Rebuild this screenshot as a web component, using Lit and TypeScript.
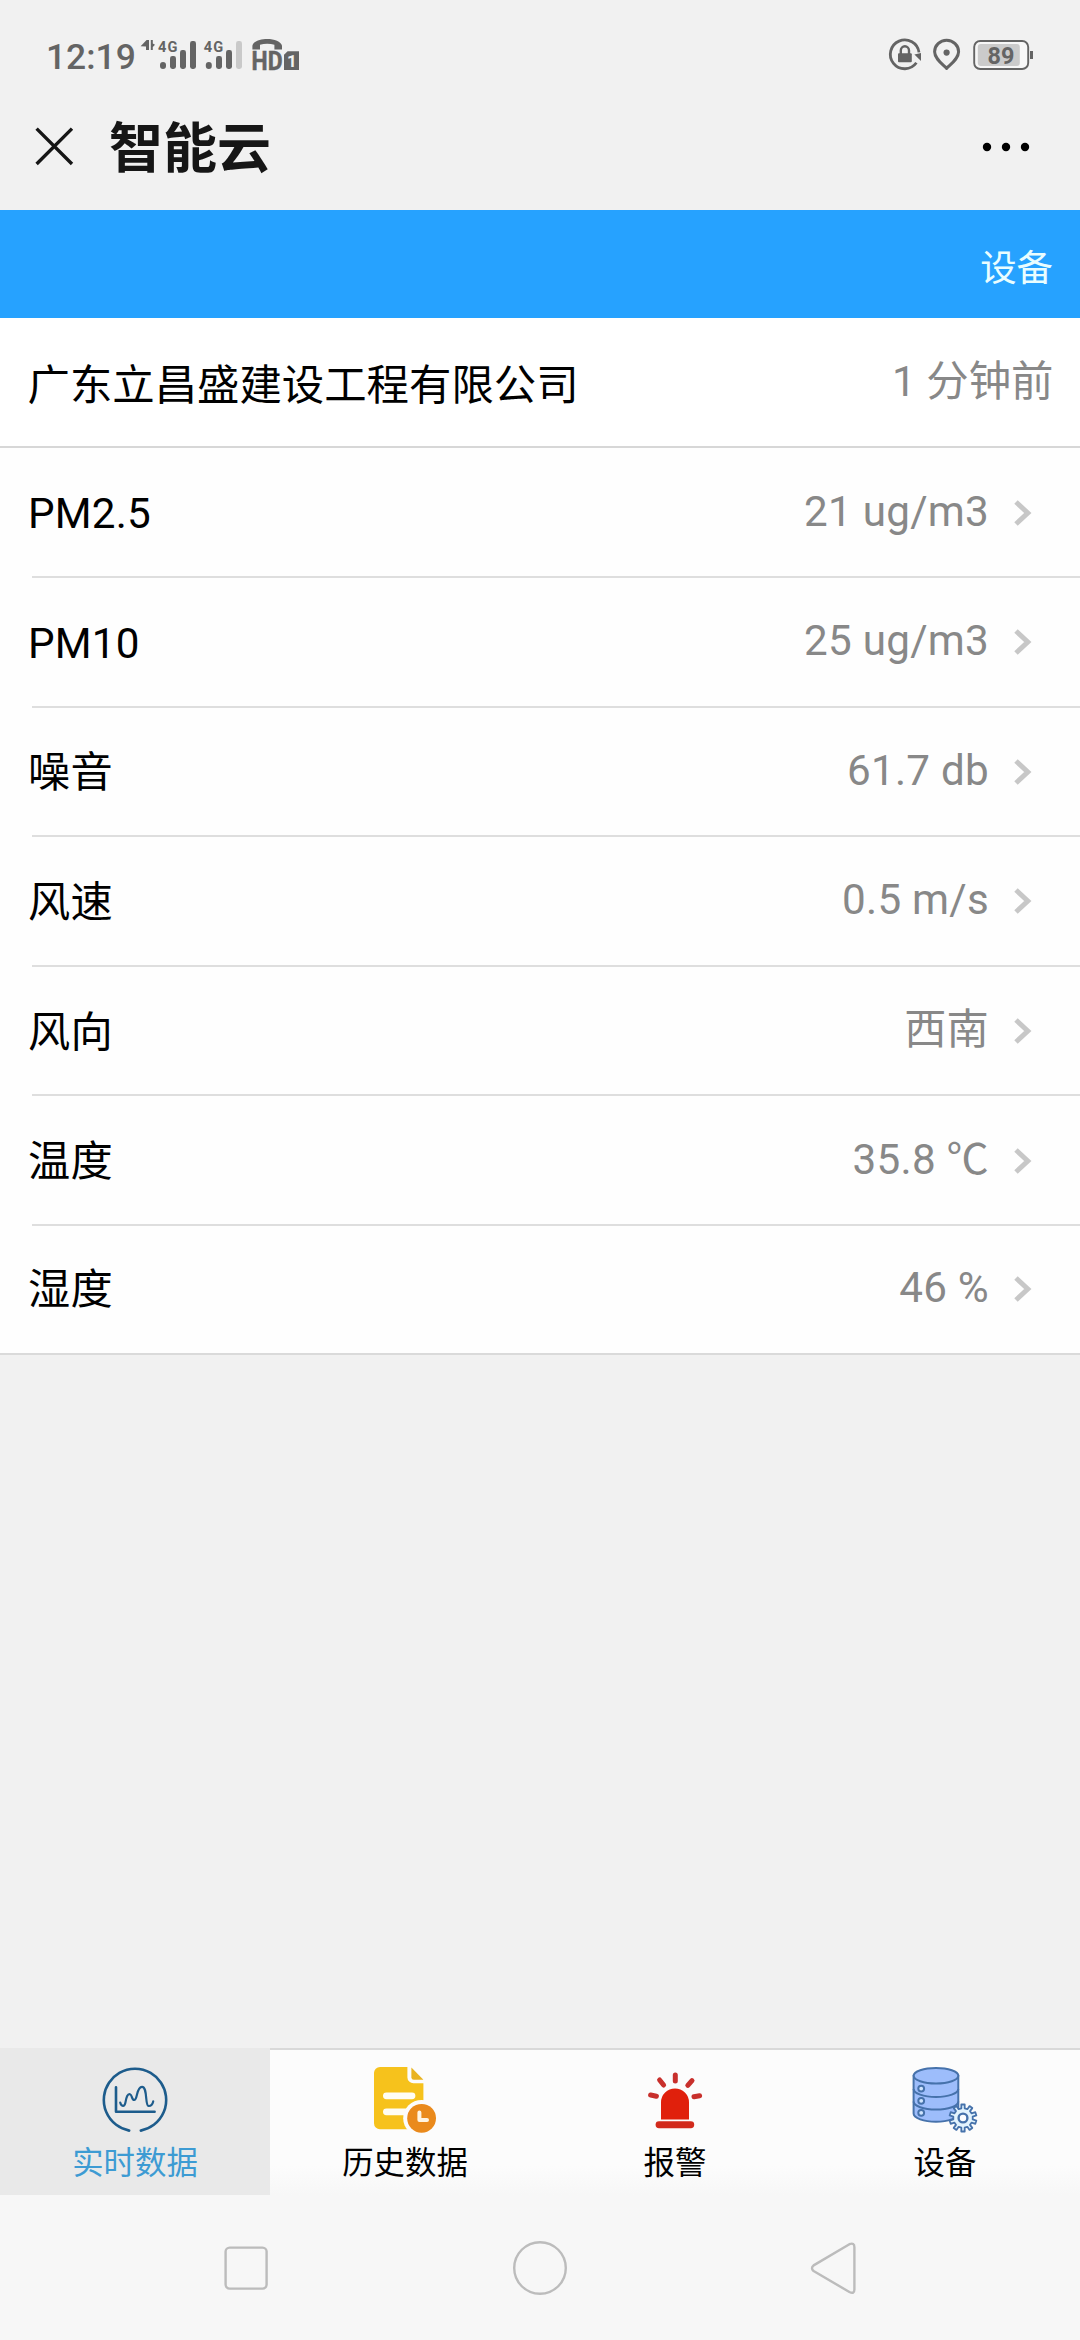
import { LitElement, html, css, svg } from "lit";
import { customElement, property } from "lit/decorators.js";

interface Reading {
  label: string;
  value: string;
}

const READINGS: Reading[] = [
  { label: "PM2.5", value: "21 ug/m3" },
  { label: "PM10", value: "25 ug/m3" },
  { label: "噪音", value: "61.7 db" },
  { label: "风速", value: "0.5 m/s" },
  { label: "风向", value: "西南" },
  { label: "温度", value: "35.8 ℃" },
  { label: "湿度", value: "46 %" },
];

/** Closed outline of a cog with square teeth. */
function gearPath(cx: number, cy: number, outer: number, inner: number, teeth: number): string {
  const step = (Math.PI * 2) / teeth;
  const pts: string[] = [];
  for (let i = 0; i < teeth; i++) {
    const a = i * step - Math.PI / 2;
    for (const [da, r] of [[-0.27, inner], [-0.2, outer], [0.2, outer], [0.27, inner]]) {
      const t = a + da * step;
      pts.push(`${(cx + Math.cos(t) * r).toFixed(2)} ${(cy + Math.sin(t) * r).toFixed(2)}`);
    }
  }
  return `M${pts.join("L")}Z`;
}

const ICONS = {
  realtime: svg`
    <g fill="none" stroke="#1d5c8c" stroke-width="2.6" stroke-linecap="round" stroke-linejoin="round">
      <path d="M30.2 66.6A31.2 31.2 0 1 1 41.8 66.6"/>
      <path d="M17 23.2V47.8H55.6"/>
      <path stroke-width="2.2" d="M21.2 38.6C22.2 42.6 25.6 43.2 26.4 38.6C27.4 33 28.6 29.6 31 30.2C33.4 30.8 32.4 36 35.2 36C38.8 36 37.2 22.8 43 22.8C48.8 22.8 45.8 41.6 49.6 42C52.2 42.2 53.4 40.6 54.2 37.4"/>
    </g>`,
  history: svg`
    <path fill="#f6c21c" d="M11 3H38.4V13.4A6 6 0 0 0 44.4 19.2H54.4V65.2H11A6 6 0 0 1 5 59.2V9A6 6 0 0 1 11 3Z"/>
    <path fill="#e9b320" d="M42.4 3.4L54.4 15.8H44.8A2.4 2.4 0 0 1 42.4 13.4Z"/>
    <path stroke="#fffdf3" stroke-width="6.8" stroke-linecap="round" d="M17.4 31.8H43M17.4 47.8H38"/>
    <circle cx="52.6" cy="54.3" r="18.4" fill="#fcfcfc"/>
    <circle cx="52.6" cy="54.3" r="14.4" fill="#ea8a1c"/>
    <path fill="none" stroke="#fff4e2" stroke-width="4" stroke-linecap="round" stroke-linejoin="round" d="M50.4 48.6V56H58"/>`,
  alarm: svg`
    <path fill="#e0200c" d="M22 55.4V38.4A14 14 0 0 1 50 38.4V55.4Z"/>
    <rect x="16.6" y="57.2" width="38.6" height="7" rx="3.4" fill="#d22a1c"/>
    <path stroke="#c8302c" stroke-width="5" stroke-linecap="round" d="M36.3 11V17M20.6 16L24.6 21M53 16.6L48.8 21.4M11.6 31L17.4 32.2M60.6 31.8L55 32.8"/>`,
  device: svg`
    <g fill="#9dbdfb" stroke="#4672ab" stroke-width="2">
      <path d="M4.6 11.8V49.6C4.6 54.2 14.6 57.8 27 57.8S49.3 54.2 49.3 49.6V11.8Z"/>
      <ellipse cx="27" cy="11.8" rx="22.3" ry="7.8"/>
      <path fill="none" d="M4.6 25C4.6 29.4 14.6 33 27 33S49.3 29.4 49.3 25M4.6 37.6C4.6 42 14.6 45.6 27 45.6S49.3 42 49.3 37.6"/>
      <circle cx="12.2" cy="24.6" r="2.9" fill="#cfe4fd"/>
      <circle cx="12.2" cy="36.8" r="2.9" fill="#cfe4fd"/>
      <circle cx="12.2" cy="48.8" r="2.9" fill="#cfe4fd"/>
      <path fill="#e2f3fd" stroke-width="1.8" stroke-linejoin="round" d=${gearPath(54, 54, 13.6, 9.8, 10)} />
      <circle cx="54" cy="54" r="4.4" fill="#fbfdff" stroke-width="2.4"/>
    </g>`,
};

type IconName = keyof typeof ICONS;

const TABS: { icon: IconName; label: string; active?: boolean }[] = [
  { icon: "realtime", label: "实时数据", active: true },
  { icon: "history", label: "历史数据" },
  { icon: "alarm", label: "报警" },
  { icon: "device", label: "设备" },
];

@customElement("status-bar")
class StatusBar extends LitElement {
  static styles = css`
    :host {
      display: flex;
      justify-content: space-between;
      height: 84px;
      padding: 0 47px 0 46px;
      box-sizing: border-box;
      color: #646464;
    }
    .left {
      display: flex;
      padding-top: 35px;
    }
    .time {
      width: 92px;
      font-size: 35.4px;
      line-height: 44px;
      font-weight: 500;
      white-space: nowrap;
    }
    .signals {
      display: block;
      width: 164px;
      height: 40px;
    }
    .indicators {
      display: block;
      width: 148px;
      height: 40px;
      margin-top: 35px;
    }
    text {
      font-family: Roboto, sans-serif;
      font-weight: 700;
    }
  `;

  render() {
    return html`
      <div class="left">
        <span class="time">12:19</span>
        <svg class="signals" viewBox="138 35 164 40" fill="#646464">
          <path d="M140.6 46.2L146.6 40H149V50H146V46.4ZM150.8 40H152.8V43.6L155 44.8L152.8 47V50H150.8Z"/>
          <text x="158" y="51.6" font-size="14.6" textLength="19.4">4G</text>
          <rect x="160" y="62" width="6" height="7" rx="3"/>
          <rect x="170" y="56" width="6" height="13" rx="2.4"/>
          <rect x="180" y="50" width="6" height="19" rx="2.4"/>
          <rect x="190" y="41" width="6" height="28" rx="2.4"/>
          <text x="203.8" y="51.6" font-size="14.6" textLength="19.4">4G</text>
          <rect x="205.8" y="62" width="6" height="7" rx="3"/>
          <rect x="216" y="56" width="6" height="13" rx="2.4"/>
          <rect x="226" y="50" width="6" height="19" rx="2.4"/>
          <rect x="236" y="41" width="6" height="28" rx="2.4" fill="#c9c9c9"/>
          <path d="M252.4 49.4V45.8C254 36.6 280.4 36.6 282 45.8V49.4H274.4V44.8C270 43.4 264.4 43.4 260 44.8V49.4Z"/>
          <text x="251.6" y="69.8" font-size="26" textLength="31" lengthAdjust="spacingAndGlyphs" stroke="#646464" stroke-width="0.5">HD</text>
          <path d="M287.6 51.2H299V70H284V54.8Z"/>
          <text x="287" y="67" font-size="17" fill="#f1f1f1">1</text>
        </svg>
      </div>
      <svg class="indicators" viewBox="884 35 148 40" fill="#646464">
        <path fill="none" stroke="#646464" stroke-width="2.8" d="M915.4 62.8A14.4 14.4 0 1 1 918 52.4"/>
        <path d="M913.4 54.4L920 53V61Z"/>
        <rect x="897" y="53.2" width="13.8" height="9" rx="1"/>
        <path fill="none" stroke="#646464" stroke-width="2.4" d="M899.8 54V50.4A4.1 4.1 0 0 1 908 50.4V54"/>
        <path fill="none" stroke="#646464" stroke-width="3" stroke-linejoin="round" d="M945.6 68.4C941 63.8 933.6 58.6 933.6 51.8A12 11.6 0 0 1 957.6 51.8C957.6 58.6 950.2 63.8 945.6 68.4Z"/>
        <circle cx="945.6" cy="52.6" r="3.1"/>
        <rect x="973.2" y="41" width="54" height="28" rx="6" fill="#f7f7f7" stroke="#646464" stroke-width="1.9"/>
        <rect x="976.8" y="44" width="42" height="22" rx="3" fill="#cbcbcb"/>
        <rect x="1029" y="51" width="3" height="8"/>
        <text x="1000" y="63.6" font-size="23.4" text-anchor="middle" textLength="27">89</text>
      </svg>
    `;
  }
}

@customElement("reading-row")
class ReadingRow extends LitElement {
  static styles = css`
    :host {
      display: block;
      padding-left: 28px;
    }
    .row {
      display: flex;
      align-items: center;
      height: 129.6px;
      padding-right: 47px;
      box-sizing: border-box;
      background: linear-gradient(#dedede, #dedede) 4px 100% / 100% 2px no-repeat;
    }
    :host([last]) .row {
      height: 127px;
      padding-bottom: 0;
      background: none;
    }
    .label,
    .value {
      font-size: 42.2px;
      line-height: 60px;
    }
    .label {
      flex: 1;
      padding-top: 2px;
      letter-spacing: 0.2px;
      color: #000;
    }
    .value {
      padding-bottom: 3px;
      letter-spacing: 0.25px;
      color: #888;
    }
    .chevron {
      width: 20px;
      height: 28px;
      margin-left: 24px;
      margin-bottom: 1px;
    }
  `;

  @property() label = "";
  @property() value = "";

  render() {
    return html`
      <div class="row">
        <span class="label">${this.label}</span>
        <span class="value">${this.value}</span>
        <svg class="chevron" viewBox="0 0 20 28">
          <path d="M3 3L14.8 14L3 25" fill="none" stroke="#c7c7c7" stroke-width="5"/>
        </svg>
      </div>
    `;
  }
}

@customElement("app-root")
class AppRoot extends LitElement {
  static styles = css`
    :host {
      display: flex;
      flex-direction: column;
      width: 1080px;
      height: 2340px;
      overflow: hidden;
      background: #f1f1f1;
      font-family: Roboto, "Noto Sans CJK SC", sans-serif;
    }
    .titlebar {
      display: flex;
      align-items: center;
      height: 126px;
      padding: 0 48px 0 34px;
      box-sizing: border-box;
      flex: none;
    }
    .close {
      width: 40px;
      height: 40px;
      margin-bottom: 3px;
    }
    .title {
      flex: 1;
      margin: 0 0 0 35px;
      padding-top: 5px;
      font-size: 54px;
      line-height: 80px;
      font-weight: 700;
      color: #161616;
    }
    .more {
      width: 50px;
      height: 12px;
    }
    .toolbar {
      display: flex;
      align-items: center;
      justify-content: flex-end;
      height: 108px;
      padding: 2px 27px 0 0;
      box-sizing: border-box;
      flex: none;
      background: #26a2ff;
      color: #e9fdff;
      font-size: 36.4px;
    }
    .company {
      display: flex;
      align-items: center;
      justify-content: space-between;
      height: 130.4px;
      padding: 0 26.5px 0 27.5px;
      box-sizing: border-box;
      flex: none;
      background: #fff;
      border-bottom: 2.6px solid #d7d7d7;
      font-size: 42.4px;
      line-height: 60px;
    }
    .name {
      color: #000;
      padding-top: 8px;
    }
    .updated {
      color: #888;
    }
    .readings {
      flex: none;
      background: #fefefe;
      border-bottom: 2px solid #dadada;
    }
    .blank {
      flex: 1;
    }
    .tabs {
      display: grid;
      grid-template-columns: repeat(4, 1fr);
      height: 147px;
      flex: none;
      background: linear-gradient(#fcfcfc 80%, #f7f7f7);
    }
    .tab {
      display: flex;
      flex-direction: column;
      align-items: center;
      padding-top: 14px;
      border-top: 2px solid #d9d9d9;
      box-sizing: border-box;
      font-size: 31.4px;
      line-height: 50px;
      color: #000;
    }
    .tab.active {
      background: #e9e9e9;
      border-top-color: #e9e9e9;
      color: #3d9bd3;
    }
    .icon {
      width: 72px;
      height: 72px;
      margin-bottom: 2.5px;
    }
    .nav {
      display: grid;
      grid-template-columns: repeat(3, 294px);
      justify-content: center;
      align-items: center;
      justify-items: center;
      height: 145px;
      flex: none;
      background: #f7f7f7;
    }
    .key {
      width: 60px;
      height: 60px;
      fill: none;
      stroke: #bcbcbc;
      stroke-width: 2.4;
      stroke-linejoin: round;
    }
  `;

  render() {
    return html`
      <status-bar></status-bar>
      <header class="titlebar">
        <svg class="close" viewBox="0 0 40 40">
          <path d="M2.6 2.6L38 38M38 2.6L2.6 38" stroke="#161616" stroke-width="3.4"/>
        </svg>
        <h1 class="title">智能云</h1>
        <svg class="more" viewBox="0 0 50 12">
          <circle cx="5" cy="6" r="4.2"/>
          <circle cx="24" cy="6" r="4.2"/>
          <circle cx="43" cy="6" r="4.2"/>
        </svg>
      </header>
      <div class="toolbar"><span>设备</span></div>
      <section class="company">
        <span class="name">广东立昌盛建设工程有限公司</span>
        <span class="updated">1 分钟前</span>
      </section>
      <main class="readings">
        ${READINGS.map(
          (r, i) => html`<reading-row
            .label=${r.label}
            .value=${r.value}
            ?last=${i === READINGS.length - 1}
          ></reading-row>`
        )}
      </main>
      <div class="blank"></div>
      <nav class="tabs">
        ${TABS.map(
          (t) => html`<div class="tab ${t.active ? "active" : ""}">
            <svg class="icon" viewBox="0 0 72 72">${ICONS[t.icon]}</svg>
            <span>${t.label}</span>
          </div>`
        )}
      </nav>
      <footer class="nav">
        <svg class="key" viewBox="0 0 60 60"><rect x="9.6" y="9.6" width="41" height="41" rx="4"/></svg>
        <svg class="key" viewBox="0 0 60 60"><circle cx="30" cy="30" r="25.8"/></svg>
        <svg class="key" viewBox="0 0 60 60"><path d="M9.6 27.4L45.4 6.2Q50.4 4.2 50.4 9.2V51.6Q50.4 56.4 45.4 54L9.6 33Q6.4 30.2 9.6 27.4Z"/></svg>
      </footer>
    `;
  }
}
